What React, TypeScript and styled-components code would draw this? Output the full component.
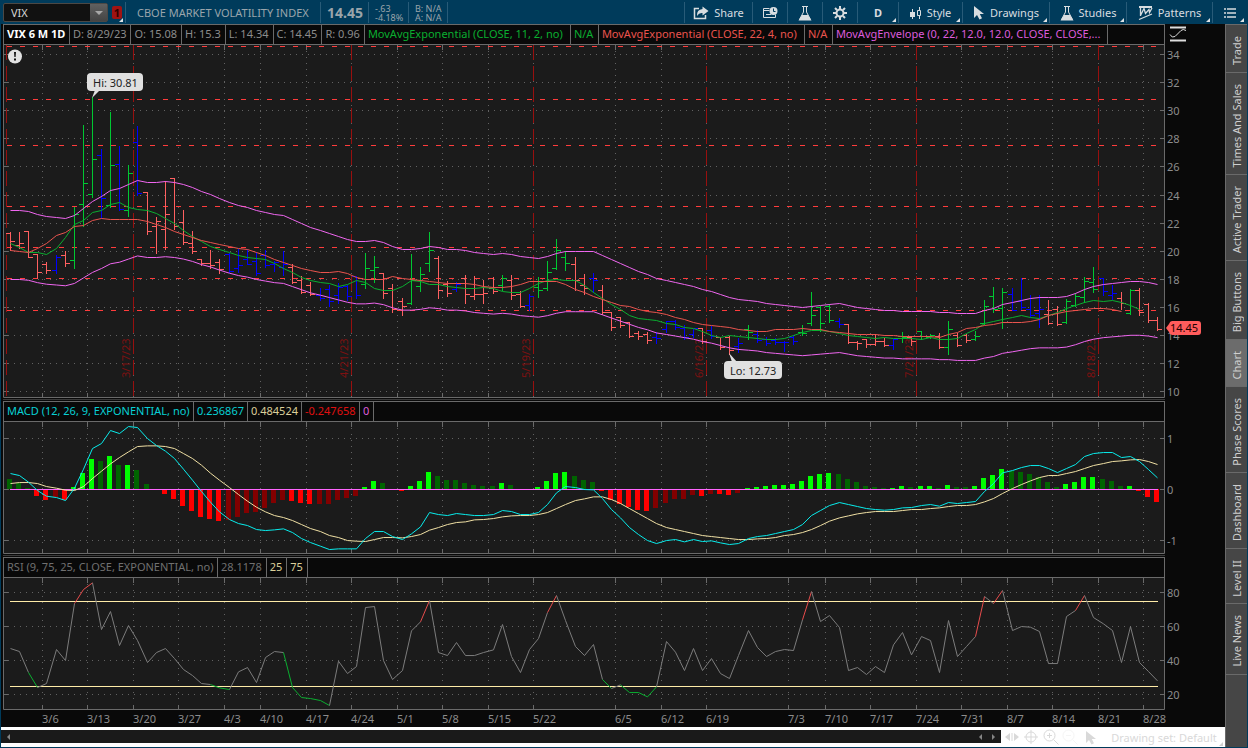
import React, { useLayoutEffect, useRef, useState } from "react";
import styled, { createGlobalStyle, css } from "styled-components";

const Global = createGlobalStyle`
  * { box-sizing: border-box; }
  body { margin: 0; background: #003b5b; font-family: "Noto Sans", "Open Sans", sans-serif; }
  button, input { font-family: inherit; }
  svg { display: block; }
`;

/* ---------- page frame ---------- */

const Page = styled.div`
  display: flex;
  flex-direction: column;
  min-height: 100vh;
  background: #003b5b;
`;

const Toolbar = styled.header`
  display: flex;
  height: 24px;
  padding: 2px 2px 1px 3px;
  background: #003b5b;
  color: #9aa5ab;
`;

const Main = styled.div`
  display: flex;
  flex: 1;
  padding: 0 1px 1px;
`;

const ChartColumn = styled.main`
  display: flex;
  flex-direction: column;
  flex: 1;
  min-width: 0;
  background: #090909;
`;

/* ---------- toolbar ---------- */

const SymbolBox = styled.form`
  display: flex;
  width: 105px;
  height: 19px;
  margin-top: 1px;
  border: 1px solid #4b4845;
  border-radius: 2px;
  background: #111;
`;

const SymbolInput = styled.input`
  flex: 1;
  min-width: 0;
  padding: 0 0 0 7px;
  border: 0;
  background: none;
  color: #d6d6d6;
  font-size: 11px;
`;

const DropButton = styled.button`
  display: flex;
  align-items: center;
  justify-content: center;
  width: 17px;
  padding: 0;
  border: 0;
  background: linear-gradient(#606060, #444);
  color: #a8a8a8;
`;

const corner = css`
  &::after {
    content: "";
    position: absolute;
    right: 2px;
    bottom: 1px;
    border: solid transparent;
    border-width: 2px;
    border-right-color: #dfe3e5;
    border-bottom-color: #dfe3e5;
  }
`;

const LinkButton = styled.button`
  position: relative;
  width: 17px;
  padding: 0 5px 1px 0;
  border: 0;
  background: none;
  ${corner}
`;

const LinkMark = styled.span`
  display: block;
  width: 10px;
  margin-left: 4px;
  border-radius: 2px;
  background: #a01313;
  color: #300;
  font-size: 11px;
  font-weight: 700;
  line-height: 13px;
`;

const Cell = styled.div<{ $w: number; $size?: number; $bold?: boolean }>`
  display: flex;
  flex-direction: column;
  align-items: flex-start;
  justify-content: center;
  width: ${(p) => p.$w}px;
  padding-left: ${(p) => (p.$size ? 6 : 11)}px;
  border-left: 1px solid #285b78;
  font-size: ${(p) => p.$size ?? 11}px;
  font-weight: ${(p) => (p.$bold ? 700 : 400)};
  line-height: ${(p) => (p.$size === 9 ? 9 : 16)}px;
  white-space: nowrap;
`;

const Spacer = styled.div`
  flex: 1;
  border-left: 1px solid #285b78;
`;

const Tool = styled.button<{ $w: number; $menu?: boolean }>`
  position: relative;
  display: flex;
  align-items: center;
  justify-content: center;
  gap: 5px;
  width: ${(p) => p.$w}px;
  padding: 0;
  border: 0;
  border-left: 1px solid #285b78;
  background: none;
  color: #d8dde0;
  font-size: 11px;
  ${(p) => p.$menu && corner}
`;

/* ---------- study legends ---------- */

const LegendRow = styled.div`
  display: flex;
  height: 21px;
  margin-left: 2px;
`;

const Legend = styled.div`
  display: flex;
  flex: 1;
  min-width: 0;
  overflow: hidden;
  border: 1px solid #6a6a6a;
`;

const LegendCell = styled.span<{ $c: string; $w?: number; $bold?: boolean }>`
  flex: none;
  width: ${(p) => (p.$w ? `${p.$w}px` : "auto")};
  padding: 0 4px 0 3px;
  border-right: 1px solid #6a6a6a;
  color: ${(p) => p.$c};
  font-size: 11px;
  font-weight: ${(p) => (p.$bold ? 700 : 400)};
  line-height: 18px;
  white-space: nowrap;
`;

const LegendAside = styled.div`
  width: 60px;
  padding: 2px 0 0 4px;
`;

const Divider = styled.div`
  height: 3px;
  margin: 0 60px 0 2px;
  border: solid #090909;
  border-width: 1px 0;
  background: #3a3a3a;
`;

const PlotBox = styled.div<{ $h: number }>`
  height: ${(p) => p.$h}px;
  margin-left: 2px;
  overflow: hidden;

  text {
    font-size: 11px;
  }
`;

/* ---------- footer ---------- */

const Footer = styled.footer`
  display: flex;
  height: 20px;
  background: #fff;
`;

const ScrollTrack = styled.div`
  display: flex;
  align-items: center;
  flex: 1;
  height: 13px;
  margin-top: 3px;
  padding: 0 0 0 3px;
  background: #1a1a1a;
`;

const ScrollGap = styled.div`
  flex: 1;
`;

const ScrollButton = styled.button`
  display: flex;
  align-items: center;
  justify-content: center;
  width: 14px;
  margin-left: -3px;
  padding: 0;
  border: 0;
  background: none;
  color: #858585;

  & + & {
    margin-left: 0;
  }
`;

const FooterTools = styled.div`
  display: flex;
  align-items: center;
  width: 224px;
  padding-left: 2px;
`;

const FooterButton = styled.button<{ $w?: number; $menu?: boolean }>`
  position: relative;
  display: flex;
  align-items: center;
  justify-content: center;
  width: ${(p) => p.$w ?? 20}px;
  height: 20px;
  padding: 0;
  border: 0;
  background: none;
  color: #d9d9d9;
  font-size: 11px;
  white-space: nowrap;
  ${(p) => p.$menu && corner}

  &::after {
    border-right-color: #d0d0d0;
    border-bottom-color: #d0d0d0;
  }
`;

/* ---------- side tabs ---------- */

const SideBar = styled.nav`
  display: flex;
  flex-direction: column;
  width: 22px;
  border-left: 1px solid #6a6a6a;
  border-top: 1px solid #6a6a6a;
  background: #464646;
`;

const SideTab = styled.button<{ $h: number; $active?: boolean }>`
  display: flex;
  align-items: center;
  justify-content: center;
  height: ${(p) => p.$h}px;
  padding: 4px 1px 0 0;
  border: 0;
  border-bottom: 1px solid #6a6a6a;
  background: ${(p) => (p.$active ? "#6c6c6c" : "#464646")};
  color: #cfcfcf;
  font-size: 11px;
`;

const SideText = styled.span`
  writing-mode: vertical-rl;
  transform: rotate(180deg);
  white-space: nowrap;
`;

/* ---------- data ---------- */

type Bar = [string, number, number, number, number];

// colour, high, low, open, close; heights are on the plot's vertical scale
const BARS: Bar[] = [
  ["r", 232, 250, 233, 241], ["r", 232, 248, 245, 243], ["r", 231, 257, 231, 257], ["r", 254, 278, 254, 272],
  ["r", 262, 273, 264, 270], ["b", 255, 273, 270, 257], ["r", 251, 266, 255, 263], ["g", 207, 268, 260, 214],
  ["g", 125, 226, 204, 183], ["g", 97, 197, 194, 159], ["b", 149, 218, 155, 198], ["g", 112, 207, 205, 165],
  ["b", 146, 210, 164, 209], ["g", 165, 216, 210, 173], ["b", 126, 195, 142, 193], ["r", 192, 234, 192, 231],
  ["r", 217, 253, 226, 221], ["r", 181, 249, 229, 214], ["r", 178, 229, 178, 226], ["r", 210, 244, 222, 242],
  ["r", 231, 253, 243, 251], ["r", 259, 265, 259, 263], ["r", 250, 268, 263, 265], ["r", 259, 273, 262, 269],
  ["b", 253, 272, 254, 271], ["b", 249, 272, 268, 265], ["b", 249, 264, 259, 264], ["b", 252, 275, 261, 273],
  ["b", 250, 267, 255, 265], ["b", 261, 271, 264, 262], ["b", 251, 275, 267, 264], ["r", 264, 283, 267, 282],
  ["r", 276, 293, 280, 292], ["r", 282, 295, 285, 294], ["b", 288, 300, 295, 298], ["b", 285, 306, 289, 301],
  ["b", 283, 303, 295, 287], ["b", 285, 300, 286, 296], ["b", 276, 298, 276, 295], ["g", 253, 288, 284, 268],
  ["g", 256, 282, 270, 267], ["r", 273, 298, 273, 293], ["r", 284, 312, 288, 309], ["r", 298, 315, 301, 306],
  ["g", 254, 304, 303, 280], ["g", 267, 291, 286, 274], ["g", 232, 271, 263, 250], ["r", 256, 298, 258, 290],
  ["r", 281, 296, 284, 293], ["b", 282, 291, 289, 284], ["r", 275, 303, 278, 294], ["r", 276, 299, 296, 294],
  ["r", 280, 303, 294, 293], ["r", 277, 293, 288, 291], ["g", 275, 290, 285, 278], ["r", 275, 299, 280, 295],
  ["r", 291, 307, 294, 306], ["b", 294, 310, 305, 296], ["g", 277, 297, 287, 290], ["g", 261, 290, 288, 272],
  ["g", 239, 269, 268, 250], ["g", 251, 270, 257, 263], ["r", 257, 290, 264, 280], ["r", 274, 294, 285, 288],
  ["b", 273, 292, 278, 280], ["r", 285, 314, 290, 312], ["r", 312, 330, 312, 327], ["r", 317, 327, 317, 325],
  ["r", 322, 337, 322, 336], ["r", 331, 339, 333, 336], ["r", 332, 343, 334, 340], ["b", 332, 343, 337, 338],
  ["b", 321, 332, 329, 321], ["b", 320, 329, 321, 327], ["b", 325, 339, 328, 337], ["b", 329, 337, 334, 328],
  ["r", 328, 343, 328, 341], ["b", 326, 338, 330, 336], ["r", 337, 349, 337, 347], ["r", 336, 354, 337, 350],
  ["b", 338, 352, 346, 343], ["g", 325, 339, 329, 332], ["b", 330, 342, 334, 340], ["b", 337, 345, 339, 343],
  ["b", 338, 344, 340, 342], ["b", 341, 351, 342, 342], ["b", 335, 344, 337, 341], ["g", 325, 335, 332, 333],
  ["g", 292, 325, 323, 315], ["g", 306, 331, 307, 323], ["g", 304, 322, 306, 320], ["b", 318, 327, 321, 324],
  ["r", 324, 343, 324, 342], ["r", 341, 349, 342, 343], ["r", 339, 347, 339, 344], ["r", 334, 345, 344, 341],
  ["r", 338, 346, 341, 345], ["b", 339, 349, 345, 339], ["g", 332, 342, 336, 337], ["r", 336, 345, 337, 341],
  ["g", 331, 339, 331, 336], ["g", 334, 338, 337, 335], ["r", 333, 348, 336, 347], ["g", 321, 354, 347, 329],
  ["r", 333, 346, 335, 345], ["r", 334, 342, 335, 340], ["g", 331, 340, 339, 336], ["g", 300, 324, 323, 306],
  ["g", 287, 312, 296, 309], ["g", 288, 328, 308, 292], ["b", 288, 310, 294, 310], ["b", 278, 309, 301, 307],
  ["b", 295, 317, 309, 315], ["b", 295, 327, 313, 309], ["r", 300, 324, 314, 323], ["r", 306, 325, 309, 324],
  ["g", 299, 323, 322, 301], ["g", 293, 306, 305, 296], ["g", 277, 302, 297, 281], ["g", 267, 292, 282, 289],
  ["b", 278, 295, 278, 291], ["b", 285, 299, 295, 293], ["r", 292, 309, 298, 303], ["g", 289, 314, 313, 290],
  ["r", 288, 315, 290, 312], ["r", 303, 322, 304, 320], ["r", 317, 330, 320, 329],
];

const UPPER = [210, 210, 211, 214, 216, 217, 218, 215, 208, 201, 196, 190, 188, 184, 180, 182, 182, 181, 182, 184, 187, 191, 194, 198, 202, 205, 207, 210, 212, 214, 215, 219, 223, 227, 230, 233, 236, 239, 241, 241, 240, 242, 246, 249, 249, 248, 246, 247, 249, 249, 250, 252, 253, 254, 253, 254, 256, 257, 258, 256, 253, 251, 251, 251, 251, 255, 259, 263, 267, 271, 274, 278, 280, 282, 284, 286, 289, 291, 294, 297, 299, 300, 301, 303, 304, 305, 306, 307, 306, 305, 304, 303, 305, 307, 308, 309, 310, 310, 311, 311, 311, 311, 312, 312, 313, 313, 313, 310, 308, 304, 302, 300, 298, 297, 297, 297, 296, 293, 289, 286, 284, 283, 282, 281, 281, 282, 284];

const SLOW = [250, 251, 252, 248, 243, 235, 232, 226, 225, 220, 218, 219, 219, 219, 219, 221, 224, 227, 231, 234, 237, 240, 242, 244, 246, 248, 249, 252, 255, 259, 262, 265, 268, 270, 272, 272, 271, 273, 277, 279, 279, 279, 276, 278, 279, 280, 281, 282, 283, 283, 283, 284, 286, 287, 287, 286, 284, 281, 281, 281, 281, 284, 289, 292, 296, 299, 302, 305, 306, 309, 311, 312, 314, 317, 319, 322, 324, 325, 326, 327, 329, 330, 331, 331, 329, 329, 329, 328, 329, 329, 331, 332, 333, 334, 334, 334, 335, 335, 336, 336, 336, 336, 337, 334, 332, 328, 327, 325, 324, 322, 322, 322, 321, 319, 315, 313, 311, 310, 309, 308, 308, 309, 311];

const FAST = [243, 247, 252, 252, 254, 248, 237, 224, 220, 212, 210, 204, 202, 207, 209, 210, 213, 218, 223, 230, 236, 241, 246, 249, 252, 255, 257, 258, 259, 263, 268, 272, 277, 280, 282, 283, 286, 284, 280, 282, 288, 290, 290, 286, 280, 281, 284, 284, 286, 287, 288, 288, 287, 288, 291, 292, 292, 288, 283, 280, 279, 280, 280, 285, 292, 298, 304, 309, 315, 318, 319, 320, 323, 324, 327, 328, 331, 335, 337, 335, 336, 337, 338, 339, 339, 338, 335, 332, 330, 330, 331, 333, 335, 336, 337, 338, 337, 338, 338, 338, 339, 337, 339, 339, 338, 333, 329, 323, 321, 319, 317, 315, 317, 318, 315, 312, 308, 305, 302, 300, 301, 300, 302, 305, 309];

const HIST = [10, 6, 1, -7, -11, -8, -11, 2, 16, 30, 28, 33, 24, 24.1, 19, 5, -1, -5, -10, -17, -22, -28, -30, -32, -31, -28, -24, -23, -19, -14, -11, -12, -14, -15, -15, -15, -11, -9, -7, 2, 8, 6, 0, -2, 3, 8, 17, 13, 9, 9, 6, 4, 3, 3, 6, 4, 0, 0, 2, 8, 16, 17, 13, 9, 7, -2, -11, -15, -18, -21, -22, -19, -14, -10, -10, -6, -7, -5, -5.1, -6, -4, 1, 2, 3, 4, 4.1, 5, 8, 13, 15, 16, 15, 10, 7, 3, 2, 1, 1.1, 3, 2, 3, 3.1, 1, 4, 2, 2, 3, 11, 14, 20, 18, 17, 15, 12, 7, 2, 5, 7, 12, 12.1, 10, 8, 3, 3.1, -2, -8, -13];

// oscillator readings, in thirds of a plot unit below the top of the lower panels
const MACD = [235, 241, 261, 286, 303, 307, 316, 279, 222, 160, 145, 106, 115, 94, 97, 130, 151, 168, 190, 222, 255, 289, 321, 350, 373, 385, 391, 403, 406, 404, 401, 412, 430, 442, 453, 463, 461, 461, 461, 430, 409, 409, 424, 433, 416, 395, 352, 358, 361, 355, 358, 361, 361, 358, 346, 349, 358, 358, 352, 328, 293, 274, 277, 283, 284, 310, 343, 368, 397, 418, 436, 445, 436, 433, 440, 433, 439, 437, 443, 448, 445, 430, 424, 421, 415, 409, 403, 388, 361, 346, 331, 322, 328, 334, 340, 343, 345, 343, 338, 337, 331, 328, 333, 322, 325, 322, 319, 289, 265, 233, 226, 217, 211, 211, 220, 232, 220, 208, 184, 175, 172, 172, 187, 184, 199, 223, 248];

const SIGNAL = [265, 262, 262, 265, 274, 279, 285, 286, 274, 250, 228, 206, 187, 170, 154, 152, 152, 154, 160, 175, 190, 210, 234, 255, 277, 298, 318, 336, 350, 361, 367, 376, 388, 400, 409, 421, 427, 436, 438, 439, 433, 427, 427, 428, 424, 418, 405, 397, 388, 382, 380, 374, 373, 370, 365, 362, 361, 361, 358, 352, 340, 328, 316, 311, 305, 305, 313, 325, 340, 355, 370, 385, 397, 403, 409, 415, 421, 424, 427, 430, 433, 433, 431, 430, 427, 421, 418, 412, 403, 391, 378, 368, 362, 356, 352, 349, 349, 349, 346, 343, 343, 340, 338, 334, 331, 331, 328, 320, 310, 295, 280, 268, 257, 247, 241, 241, 235, 229, 220, 211, 205, 199, 197, 194, 193, 199, 208];

const RSI = [760, 769, 832, 877, 865, 763, 796, 625, 583, 563, 703, 649, 751, 691, 736, 802, 772, 760, 790, 823, 841, 865, 868, 878, 883, 830, 817, 862, 787, 769, 772, 877, 907, 910, 916, 931, 798, 835, 814, 637, 634, 796, 853, 826, 707, 680, 616, 772, 781, 742, 781, 781, 772, 764, 688, 784, 832, 763, 730, 652, 601, 676, 754, 781, 748, 853, 880, 869, 892, 892, 905, 875, 739, 771, 826, 760, 826, 790, 835, 850, 781, 706, 757, 784, 769, 763, 766, 674, 589, 679, 661, 697, 826, 817, 838, 814, 832, 749, 712, 779, 724, 736, 832, 676, 784, 754, 724, 604, 625, 586, 706, 694, 696, 709, 805, 805, 664, 646, 601, 667, 686, 706, 802, 694, 802, 829, 857];

const WEEKS: [number, string][] = [
  [42, "3/6"], [87, "3/13"], [133, "3/20"], [178, "3/27"], [224, "4/3"], [260, "4/10"], [306, "4/17"], [351, "4/24"],
  [397, "5/1"], [442, "5/8"], [488, "5/15"], [533, "5/22"], [615, "6/5"], [661, "6/12"], [706, "6/19"], [788, "7/3"],
  [825, "7/10"], [870, "7/17"], [916, "7/24"], [961, "7/31"], [1007, "8/7"], [1052, "8/14"], [1098, "8/21"], [1143, "8/28"],
];

const EXPIRIES: [number, string][] = [
  [6, ""], [133, "3/17/23"], [351, "4/21/23"], [533, "5/19/23"], [706, "6/16/23"], [916, "7/21/23"], [1098, "8/18/23"],
];

const LEVELS = [46, 99, 145, 206, 247, 278, 310];
const PRICES: [number, string][] = Array.from({ length: 13 }, (_, i) => [54 + Math.round(i * 28.1), String(34 - 2 * i)]);
const COLORS: Record<string, string> = { r: "#ff6060", g: "#00c832", b: "#0000ff" };

/* ---------- plots ---------- */

const LEFT = 3;
const AXIS = 61;

type Scale = { w: number; right: number; sx: (v: number) => number; bx: (i: number) => number };

function Plot({ top, bottom, height, draw }: { top: number; bottom: number; height: number; draw: (s: Scale) => React.ReactNode }) {
  const ref = useRef<HTMLDivElement>(null);
  const [w, setW] = useState(1222);
  useLayoutEffect(() => {
    const el = ref.current;
    if (!el) return;
    const measure = () => setW(Math.max(300, el.clientWidth));
    measure();
    const ro = new ResizeObserver(measure);
    ro.observe(el);
    return () => ro.disconnect();
  }, []);
  const right = LEFT + w - AXIS;
  const k = (right - LEFT) / 1161;
  const sx = (v: number) => Math.floor(LEFT + (v - LEFT) * k);
  const scale: Scale = { w, right, sx, bx: (i) => sx(10.5 + 9.105 * i) };
  return (
    <PlotBox $h={height} ref={ref}>
      <svg width={w} height={height} viewBox={`${LEFT} ${top} ${w} ${height}`}>
        <rect x={LEFT} y={top} width={right - LEFT} height={bottom - top} fill="#1b1b1b" />
        {draw(scale)}
        <path d={`M3.5 ${top}V${bottom + 0.5}H${right + 0.5}V${top}`} fill="none" stroke="#6a6a6a" />
      </svg>
    </PlotBox>
  );
}

function Grid({ s, top, bottom, rows }: { s: Scale; top: number; bottom: number; rows: [number, string][] }) {
  return (
    <g shapeRendering="crispEdges">
      {rows.map(([y, label]) => (
        <g key={label}>
          <path d={`M8 ${y + 0.5}H${s.right - 6}`} stroke="#626262" strokeDasharray="1 5" />
          <path d={`M3 ${y + 0.5}h5M${s.right - 4} ${y + 0.5}h4`} stroke="#6a6a6a" />
          <text x={s.right + 3} y={y + 5} fill="#8c8c8c">{label}</text>
        </g>
      ))}
      {WEEKS.map(([x]) => (
        <g key={x}>
          <path d={`M${s.sx(x) + 0.5} ${top + 6}V${bottom - 5}`} stroke="#626262" strokeDasharray="1 5" />
          <path d={`M${s.sx(x) + 0.5} ${top}v5M${s.sx(x) + 0.5} ${bottom - 4}v4`} stroke="#6a6a6a" />
        </g>
      ))}
    </g>
  );
}

const line = (s: Scale, ys: number[]) => ys.map((y, i) => `${s.bx(i) + 0.5},${y + 0.5}`).join(" ");
const thirds = (v: number) => 395 + v / 3 - 0.3;

// the lower band sits at 88/112 of the upper band's price
const LOWER = UPPER.map((y) => {
  const price = 10 + (391.5 - y) / 14.05;
  return 391.5 - ((price * 0.88) / 1.12 - 10) * 14.05;
});

function PricePlot() {
  return (
    <Plot top={45} bottom={397} height={353} draw={(s) => (
      <>
        <Grid s={s} top={45} bottom={397} rows={PRICES} />
        <g shapeRendering="crispEdges">
          {LEVELS.map((y) => (
            <path key={y} d={`M7 ${y + 0.5}H${s.right - 8}`} stroke="#ff3c3c" strokeDasharray="5 8" />
          ))}
          {EXPIRIES.map(([x]) => (
            <path key={x} d={`M${s.sx(x) + 0.5} 45V397`} stroke="#98100f" strokeDasharray="15 6" />
          ))}
        </g>
        {EXPIRIES.filter(([, t]) => t).map(([x, t]) => (
          <text key={x} transform={`translate(${s.sx(x) - 3} 378) rotate(-90)`} fill="#7d1111">{t}</text>
        ))}
        <g shapeRendering="crispEdges">
          {BARS.map(([c, h, l, o, cl], i) => (
            <path key={i} d={`M${s.bx(i) + 0.5} ${h}V${l + 1}M${s.bx(i) - 4} ${o + 0.5}h4M${s.bx(i) + 1} ${cl + 0.5}h4`} stroke={COLORS[c]} />
          ))}
        </g>
        <g fill="none">
          <polyline points={line(s, FAST)} stroke="#0aae30" />
          <polyline points={line(s, SLOW)} stroke="#e9544e" />
          <polyline points={line(s, UPPER)} stroke="#f066f0" />
          <polyline points={line(s, LOWER)} stroke="#f066f0" />
        </g>
        <circle cx="15" cy="56.5" r="7" fill="#e2e2e2" />
        <path d="M14 52h2l-.4 5h-1.2zM14 58.500h2v2h-2z" fill="#111" />
        <g transform={`translate(${s.bx(9)} 0)`}>
          <path d="M0 98L3 90h5z" fill="#e0e0e0" />
          <rect x="-5" y="73" width="56" height="18" rx="4" fill="#e0e0e0" />
          <text x="1" y="87" fill="#222">Hi: 30.81</text>
        </g>
        <g transform={`translate(${s.bx(79)} 0)`}>
          <path d="M0 353L3 362h5z" fill="#e0e0e0" />
          <rect x="-5" y="361" width="58" height="18" rx="4" fill="#e0e0e0" />
          <text x="1" y="375" fill="#222">Lo: 12.73</text>
        </g>
        <path d={`M${s.right + 2} 328l3 -4q1 -3 3 -3h26q3 0 3 3v8q0 3 -3 3h-26q-2 0 -3 -3z`} fill="#ff5c5c" />
        <text x={s.right + 6} y="332" fill="#1c0000">14.45</text>
      </>
    )} />
  );
}

function MacdPlot() {
  return (
    <Plot top={422} bottom={553} height={132} draw={(s) => (
      <>
        <Grid s={s} top={422} bottom={553} rows={[[438, "1"], [489, "0"], [540, "-1"]]} />
        <g shapeRendering="crispEdges">
          {HIST.map((v, i) => {
            const prev = HIST[i - 1] ?? 99;
            const strong = v * prev <= 0 || Math.abs(v) > Math.abs(prev);
            const fill = v > 0 ? (strong ? "#00ff00" : "#006400") : strong ? "#ff0000" : "#820000";
            const h = Math.round(Math.abs(v));
            return <rect key={i} x={s.bx(i) - 3} y={v > 0 ? 489 - h : 489} width="5" height={h} fill={fill} />;
          })}
          <path d={`M10 489.500H${s.bx(126) + 1}`} stroke="#ff66ff" />
        </g>
        <g fill="none">
          <polyline points={line(s, SIGNAL.map(thirds))} stroke="#f0e0a4" />
          <polyline points={line(s, MACD.map(thirds))} stroke="#08ecec" />
        </g>
      </>
    )} />
  );
}

function RsiPlot() {
  return (
    <Plot top={578} bottom={709} height={149} draw={(s) => (
      <>
        <Grid s={s} top={578} bottom={709} rows={[[592, "80"], [626, "60"], [660, "40"], [694, "20"]]} />
        {[601, 686].map((y) => (
          <path key={y} d={`M10 ${y + 0.5}H${s.bx(126) + 1}`} stroke="#ffeca8" shapeRendering="crispEdges" />
        ))}
        {RSI.slice(1).map((v, i) => (
          <line
            key={i}
            x1={s.bx(i) + 0.5}
            y1={thirds(RSI[i]) + 0.5}
            x2={s.bx(i + 1) + 0.5}
            y2={thirds(v) + 0.5}
            stroke={v < 619 ? "#e84c4c" : v > 874 ? "#0aae30" : "#7c7c7c"}
          />
        ))}
        {WEEKS.map(([x, t]) => (
          <text key={x} x={s.sx(x)} y="723" fill="#8c8c8c">{t}</text>
        ))}
      </>
    )} />
  );
}

/* ---------- icons ---------- */

const Icon = ({ w = 16, h = 16, children }: { w?: number; h?: number; children: React.ReactNode }) => (
  <svg width={w} height={h} viewBox={`0 0 ${w} ${h}`} fill="none" stroke="currentColor" aria-hidden="true">{children}</svg>
);

const Flask = () => (
  <Icon w={14} h={16}>
    <path d="M4 1.500h6M5.500 2v5L1.500 14.500h11L8.500 7V2" />
    <path d="M4 10h6L13.500 15.500H.5z" fill="currentColor" stroke="none" />
  </Icon>
);

const Pointer = () => (
  <Icon w={12} h={15}>
    <path d="M1 1v12l3-3 2.500 4.500 2.500-1.300L6.800 9H11z" fill="currentColor" stroke="none" />
  </Icon>
);

const Arrow = ({ d }: { d: string }) => (
  <Icon w={8} h={8}><path d={d} fill="currentColor" stroke="none" /></Icon>
);

const TABS: [string, number][] = [
  ["Trade", 48], ["Times And Sales", 102], ["Active Trader", 86], ["Big Buttons", 79], ["Chart", 47],
  ["Phase Scores", 86], ["Dashboard", 76], ["Level II", 55], ["Live News", 71],
];

export default function App() {
  return (
    <Page>
      <Global />
      <Toolbar>
        <SymbolBox onSubmit={(e) => e.preventDefault()}>
          <SymbolInput aria-label="Symbol" defaultValue="VIX" />
          <DropButton type="button" aria-label="Recent symbols"><Arrow d="M0 2h8L4 6z" /></DropButton>
        </SymbolBox>
        <LinkButton aria-label="Link group"><LinkMark>1</LinkMark></LinkButton>
        <Cell $w={195}>CBOE MARKET VOLATILITY INDEX</Cell>
        <Cell $w={48} $size={14} $bold>14.45</Cell>
        <Cell $w={40} $size={9}><span>-.63</span><span>-4.18%</span></Cell>
        <Cell $w={39} $size={9}><span>B: N/A</span><span>A: N/A</span></Cell>
        <Spacer />
        <Tool $w={68}>
          <Icon w={16} h={14}>
            <path d="M6 2.500H1.500v10h11V9" strokeWidth="1.500" />
            <path d="M9.500 0.500l6 4.500-6 4.500V7Q6 6.500 4 10 3.500 3.500 9.500 3z" fill="currentColor" stroke="none" />
          </Icon>
          Share
        </Tool>
        <Tool $w={35} aria-label="Calendar">
          <Icon w={16} h={14}>
            <path d="M7.500 2.500H1.500v9h12V8.500M1.500 4.500h6M4 8.500h5" />
            <circle cx="11.500" cy="5" r="4" fill="currentColor" stroke="none" />
            <path d="M11.500 2.500v3h2" stroke="#003b5b" />
          </Icon>
        </Tool>
        <Tool $w={35} aria-label="Lab"><Flask /></Tool>
        <Tool $w={35} aria-label="Settings">
          <Icon w={14} h={14}>
            <circle cx="7" cy="7" r="3.500" strokeWidth="2" />
            <path d="M7 0v3M7 11v3M0 7h3M11 7h3M2 2l2 2M10 10l2 2M12 2l-2 2M4 10l-2 2" strokeWidth="2" />
          </Icon>
        </Tool>
        <Tool $w={41} $menu><strong>D</strong></Tool>
        <Tool $w={64} $menu>
          <Icon w={12} h={14}>
            <path d="M2.500 3v10M9.500 1v3M9.500 10v3M7.500 4.500h3v5h-3z" />
            <path d="M0 6h5v5H0z" fill="currentColor" stroke="none" />
          </Icon>
          Style
        </Tool>
        <Tool $w={87} $menu><Pointer />Drawings</Tool>
        <Tool $w={77} $menu><Flask />Studies</Tool>
        <Tool $w={86} $menu>
          <Icon w={15} h={16}>
            <path d="M1 2h13" strokeWidth="2" />
            <path d="M2.500 2v9M2.500 10.500l3.500-7 1.500 5 3.500-4 .5 3L14 3M1 14.500l13-5.500" strokeWidth="1.300" />
          </Icon>
          Patterns
        </Tool>
        <Tool $w={34} $menu aria-label="More">
          <Icon w={12} h={12}><path d="M0 2h2M3 2h9M0 6h2M3 6h9M0 10h2M3 10h9" strokeWidth="1.500" /></Icon>
        </Tool>
      </Toolbar>
      <Main>
        <ChartColumn>
          <LegendRow>
            <Legend>
              <LegendCell $c="#fff" $bold $w={66}>VIX 6 M 1D</LegendCell>
              <LegendCell $c="#8c8c8c">D: 8/29/23</LegendCell>
              <LegendCell $c="#8c8c8c">O: 15.08</LegendCell>
              <LegendCell $c="#8c8c8c">H: 15.3</LegendCell>
              <LegendCell $c="#8c8c8c">L: 14.34</LegendCell>
              <LegendCell $c="#8c8c8c">C: 14.45</LegendCell>
              <LegendCell $c="#8c8c8c">R: 0.96</LegendCell>
              <LegendCell $c="#0aae30" $w={206}>MovAvgExponential (CLOSE, 11, 2, no)</LegendCell>
              <LegendCell $c="#0aae30" $w={28}>N/A</LegendCell>
              <LegendCell $c="#e9544e" $w={206}>MovAvgExponential (CLOSE, 22, 4, no)</LegendCell>
              <LegendCell $c="#e9544e" $w={28}>N/A</LegendCell>
              <LegendCell $c="#dc5cdc" $w={275}>MovAvgEnvelope (0, 22, 12.0, 12.0, CLOSE, CLOSE,...</LegendCell>
            </Legend>
            <LegendAside>
              <Icon w={18} h={16}>
                <path d="M1 1.500h16M1 14.500h16" strokeWidth="2" stroke="#ddd" />
                <path d="M1 8.500q2 4 5 2l6-6q2-2 5 0" stroke="#ddd" />
              </Icon>
            </LegendAside>
          </LegendRow>
          <PricePlot />
          <Divider />
          <LegendRow>
            <Legend>
              <LegendCell $c="#08cfd4" $w={190}>MACD (12, 26, 9, EXPONENTIAL, no)</LegendCell>
              <LegendCell $c="#08cfd4" $w={54}>0.236867</LegendCell>
              <LegendCell $c="#dccf9a" $w={54}>0.484524</LegendCell>
              <LegendCell $c="#e01010" $w={58}>-0.247658</LegendCell>
              <LegendCell $c="#dc5cdc">0</LegendCell>
            </Legend>
            <LegendAside />
          </LegendRow>
          <MacdPlot />
          <Divider />
          <LegendRow>
            <Legend>
              <LegendCell $c="#707070" $w={214}>RSI (9, 75, 25, CLOSE, EXPONENTIAL, no)</LegendCell>
              <LegendCell $c="#707070">28.1178</LegendCell>
              <LegendCell $c="#dccf9a">25</LegendCell>
              <LegendCell $c="#dccf9a">75</LegendCell>
            </Legend>
            <LegendAside />
          </LegendRow>
          <RsiPlot />
          <Footer>
            <ScrollTrack>
              <ScrollButton aria-label="Scroll to start"><Arrow d="M6 1v6L3 4z" /></ScrollButton>
              <ScrollGap />
              <ScrollButton aria-label="Scroll left"><Arrow d="M6 1v6L3 4z" /></ScrollButton>
              <ScrollButton aria-label="Scroll right"><Arrow d="M2 1v6l3-3z" /></ScrollButton>
            </ScrollTrack>
            <FooterTools>
              <FooterButton $w={18} aria-label="Expand">
                <Icon w={14} h={10}><path d="M5 1v8L0 5zM9 1v8l5-4z" fill="currentColor" stroke="none" /><path d="M7 1v8" /></Icon>
              </FooterButton>
              <FooterButton aria-label="Crosshair">
                <Icon w={14} h={14}><circle cx="7" cy="7" r="5" /><path d="M7 0v14M0 7h14" /></Icon>
              </FooterButton>
              <FooterButton aria-label="Zoom in">
                <Icon><circle cx="6.500" cy="6.500" r="5.500" /><path d="M10.500 10.500l5 5M4 6.500h5M6.500 4v5" /></Icon>
              </FooterButton>
              <FooterButton $w={18} disabled aria-label="Zoom out">
                <Icon><g stroke="#f5f5f5"><circle cx="6.500" cy="6.500" r="5.500" /><path d="M10.500 10.500l5 5M4 6.500h5" /></g></Icon>
              </FooterButton>
              <FooterButton $w={24} aria-label="Pointer"><Pointer /></FooterButton>
              <FooterButton $w={122} $menu>Drawing set: Default</FooterButton>
            </FooterTools>
          </Footer>
        </ChartColumn>
        <SideBar>
          {TABS.map(([t, h]) => (
            <SideTab key={t} $h={h} $active={t === "Chart"}><SideText>{t}</SideText></SideTab>
          ))}
        </SideBar>
      </Main>
    </Page>
  );
}
